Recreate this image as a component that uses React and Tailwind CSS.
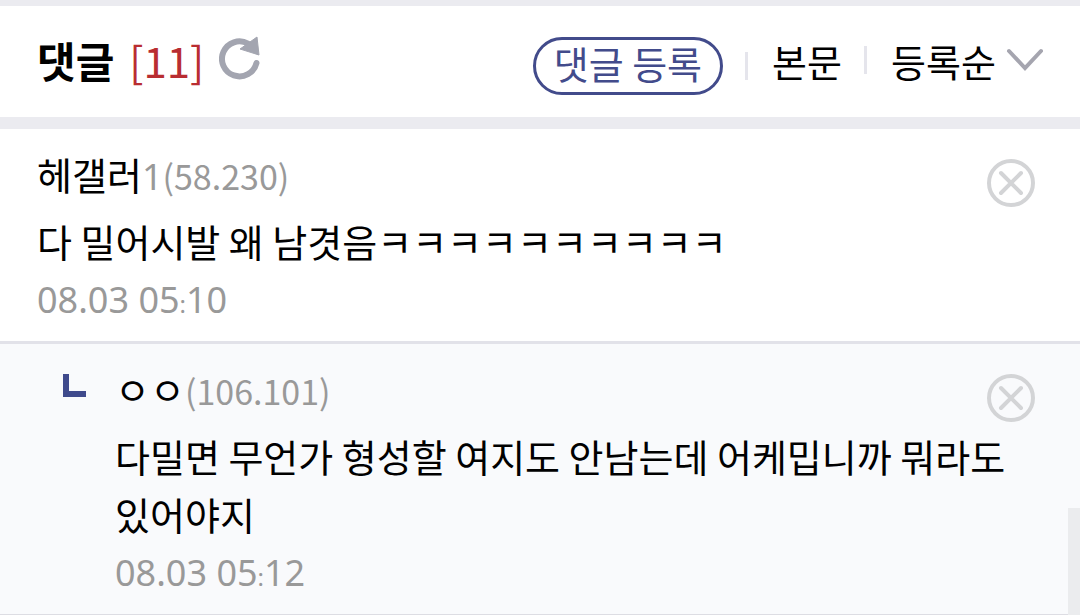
import React, { useState } from "react";

const comments = [
	{
		id: 1,
		nick: "헤갤러",
		num: "1",
		ip: "(58.230)",
		text: "다 밀어시발 왜 남겻음ㅋㅋㅋㅋㅋㅋㅋㅋㅋㅋ",
		date: "08.03 05:10",
		isReply: false,
	},
	{
		id: 2,
		nick: "ㅇㅇ",
		ip: "(106.101)",
		text: "다밀면 무언가 형성할 여지도 안남는데 어케밉니까 뭐라도 있어야지",
		date: "08.03 05:12",
		isReply: true,
	},
];

const RefreshIcon = () => (
	<svg width="42" height="44" viewBox="0 0 42 44" fill="none">
		<path
			d="M29 7.600A17.500 17.500 0 1 0 37.500 27"
			stroke="#a3a5b0"
			strokeWidth="6"
			strokeLinecap="round"
		/>
		<path
			d="M38 1L40 19L21 13Z"
			fill="#a3a5b0"
			stroke="#a3a5b0"
			strokeLinejoin="round"
		/>
	</svg>
);

const DeleteIcon = () => (
	<svg width="48" height="48" viewBox="0 0 48 48" fill="none">
		<circle cx="24" cy="24" r="22" stroke="#d3d4d6" strokeWidth="4" />
		<path
			d="M14 14L34 34M34 14L14 34"
			stroke="#d3d4d6"
			strokeWidth="4"
			strokeLinecap="round"
		/>
	</svg>
);

const Divider = () => (
	<span className="mr-6 ml-[22px] h-7 w-[3px] bg-[#e5e5ec]"></span>
);

const Comment = ({ comment, onDelete }) => {
	const { nick, num, ip, text, date, isReply } = comment;
	const [day, minute] = date.split(":");
	return (
		<li
			className={
				isReply
					? "flex border-b border-[#dddde3] bg-[#f9fafc] pt-[17px] pr-[45px] pb-[11px] pl-[62px]"
					: "flex border-b-3 border-[#e2e2e9] bg-white pt-[17px] pr-[45px] pb-[11px] pl-[37px]"
			}>
			{isReply && (
				<svg
					className="mt-[13px] mr-[29px] shrink-0"
					width="24"
					height="24"
					viewBox="0 0 24 24">
					<path d="M1 0H7V17H24V23H1Z" fill="#3f4a8c" />
				</svg>
			)}
			<div className="grow">
				<div className="flex items-start justify-between">
					<p className="text-[38px] leading-14">
						{nick}
						<span className="text-[34px] text-[#999]">
							{num && (
								<span className="font-['Noto_Sans'] text-4xl">{num}</span>
							)}
							{ip}
						</span>
					</p>
					<button
						type="button"
						aria-label="삭제"
						className="mt-[13px] cursor-pointer"
						onClick={() => onDelete(comment.id)}>
						<DeleteIcon />
					</button>
				</div>
				<p className="mt-[5px] text-[38px] leading-[58px] break-keep">{text}</p>
				<time className="block font-['Noto_Sans'] text-4xl leading-[60px] text-[#999]">
					{day}
					<span className="text-2xl">:</span>
					{minute}
				</time>
			</div>
		</li>
	);
};

const App = () => {
	const [list, setList] = useState(comments);
	const [sort, setSort] = useState("등록순");

	const deleteComment = (id) => {
		setList((prev) => prev.filter((item) => item.id !== id));
	};

	return (
		<div className="bg-white font-['Noto_Sans_CJK_KR',sans-serif] text-black">
			<header className="flex items-center justify-between border-t-6 border-b-12 border-[#ebebf0] pt-[19px] pr-9 pb-[22px] pl-[37px]">
				<div className="flex items-center">
					<h2 className="text-[42px] leading-16 font-bold">댓글</h2>
					<span className="ml-[15px] text-[42px] leading-16 text-[#b92d31]">
						[11]
					</span>
					<button
						type="button"
						aria-label="새로고침"
						className="mb-1 ml-[15px] cursor-pointer"
						onClick={() => setList(comments)}>
						<RefreshIcon />
					</button>
				</div>
				<div className="flex items-center text-[38px]">
					<div className="mt-3 flex items-center">
						<button
							type="button"
							className="cursor-pointer rounded-full border-3 border-[#424b8b] px-[18px] pb-[6px] leading-[46px] text-[#424b8b]">
							댓글 등록
						</button>
						<Divider />
					</div>
					<a href="#top">본문</a>
					<Divider />
					<label className="relative flex items-center">
						<select
							aria-label="정렬"
							value={sort}
							onChange={(e) => setSort(e.target.value)}
							className="cursor-pointer appearance-none bg-transparent pr-12">
							<option>등록순</option>
							<option>최신순</option>
							<option>답글순</option>
						</select>
						<svg
							className="pointer-events-none absolute right-0"
							width="38"
							height="24"
							viewBox="0 0 38 24"
							fill="none">
							<path
								d="M3 3L19 20L35 3"
								stroke="#a5a5af"
								strokeWidth="4"
								strokeLinecap="round"
							/>
						</svg>
					</label>
				</div>
			</header>
			<ul>
				{list.map((comment) => (
					<Comment
						key={comment.id}
						comment={comment}
						onDelete={deleteComment}
					/>
				))}
			</ul>
			{/* scroll thumb */}
			<div className="fixed right-0 bottom-0 h-[107px] w-3 bg-[#ebecee]"></div>
		</div>
	);
};

export default App;
